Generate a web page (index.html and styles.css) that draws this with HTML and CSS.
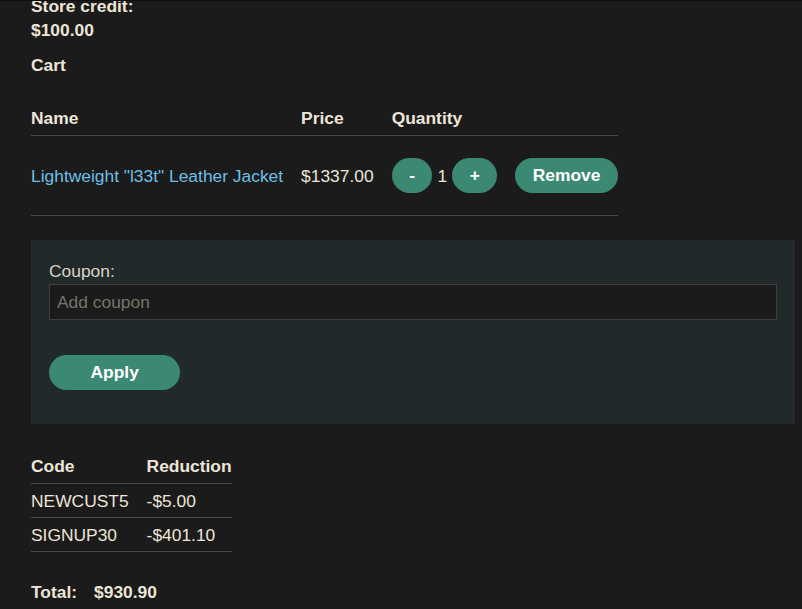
FILE: index.html
```html
<!DOCTYPE html>
<html lang="en">
<head>
<meta charset="utf-8">
<title>Cart</title>
<link rel="stylesheet" href="styles.css">
</head>
<body>
<div class="topline"></div>
<main class="page">
  <p class="credit"><strong>Store credit:<br>$100.00</strong></p>
  <p class="section-title"><strong>Cart</strong></p>
  <table class="cart">
    <thead>
      <tr><th>Name</th><th>Price</th><th>Quantity</th><th></th></tr>
    </thead>
    <tbody>
      <tr>
        <td><a class="product" href="#">Lightweight "l33t" Leather Jacket</a></td>
        <td>$1337.00</td>
        <td><div class="qty"><button class="btn">-</button><span>1</span><button class="btn">+</button></div></td>
        <td><button class="btn">Remove</button></td>
      </tr>
    </tbody>
  </table>
  <form class="coupon-panel">
    <label class="coupon-label" for="coupon">Coupon:</label>
    <input class="coupon-input" id="coupon" type="text" placeholder="Add coupon">
    <button class="btn apply" type="button">Apply</button>
  </form>
  <table class="codes">
    <thead><tr><th>Code</th><th>Reduction</th></tr></thead>
    <tbody>
      <tr><td>NEWCUST5</td><td>-$5.00</td></tr>
      <tr><td>SIGNUP30</td><td>-$401.10</td></tr>
    </tbody>
  </table>
  <table class="total">
    <tr><th>Total:</th><th>$930.90</th></tr>
  </table>
</main>
</body>
</html>
```
FILE: styles.css
```css
html, body {
  margin: 0;
  background: #1b1b1b;
}
body {
  font-family: "Liberation Sans", Arial, sans-serif;
  font-size: 17.4px;
  line-height: 24px;
  color: #ece5d8;
}
.topline {
  position: fixed;
  top: 0;
  left: 0;
  right: 0;
  height: 1px;
  background: #0e0e0e;
  z-index: 2;
}
.page {
  margin-top: -6px;
  padding: 0 7px 0 31px;
}
p { margin: 0; }
.section-title { margin-top: 11px; }
table {
  border-collapse: collapse;
  border-spacing: 0;
}
th {
  text-align: left;
  font-weight: bold;
}
th, td {
  padding: 0 18px 0 0;
  white-space: nowrap;
}
th:last-child, td:last-child { padding-right: 0; }
.cart { margin-top: 29px; }
.cart th {
  padding-bottom: 5px;
  border-bottom: 1px solid #4a4a4a;
}
.cart td {
  padding-top: 22px;
  padding-bottom: 22px;
  border-bottom: 1px solid #4a4a4a;
  vertical-align: middle;
}
.cart td:last-child { padding-right: 0; }
.product {
  color: #6fbfe6;
  text-decoration: none;
}
.qty {
  display: flex;
  align-items: center;
  gap: 5px;
}
.btn {
  height: 35px;
  padding: 0 17.5px;
  border: none;
  border-radius: 18px;
  background: #3b8972;
  color: #ffffff;
  font-family: "Liberation Sans", Arial, sans-serif;
  font-size: 17.4px;
  font-weight: bold;
  line-height: 35px;
  cursor: pointer;
  display: inline-block;
  vertical-align: middle;
}
.coupon-panel {
  margin-top: 24px;
  background: #22292b;
  padding: 19px 18px 34px;
  display: flex;
  flex-direction: column;
  align-items: flex-start;
}
.coupon-label {
  display: block;
  color: #d9d3c7;
  line-height: 24px;
}
.coupon-input {
  margin-top: 1px;
  width: 100%;
  height: 36px;
  box-sizing: border-box;
  background: #1b1b1b;
  border: 1px solid #3f403d;
  padding: 0 7px;
  color: #ece5d8;
  font-family: "Liberation Sans", Arial, sans-serif;
  font-size: 17.4px;
  outline: none;
}
.coupon-input::placeholder { color: #77736a; }
.apply {
  margin-top: 35px;
  padding: 0 41.5px;
}
.codes { margin-top: 30px; }
.codes th {
  padding-bottom: 5px;
  border-bottom: 1px solid #4a4a4a;
}
.codes td {
  padding-top: 5px;
  padding-bottom: 4px;
  border-bottom: 1px solid #4a4a4a;
}
.total { margin-top: 28px; }
.total th { padding-right: 17px; }
.total th:last-child { padding-right: 0; }
```
